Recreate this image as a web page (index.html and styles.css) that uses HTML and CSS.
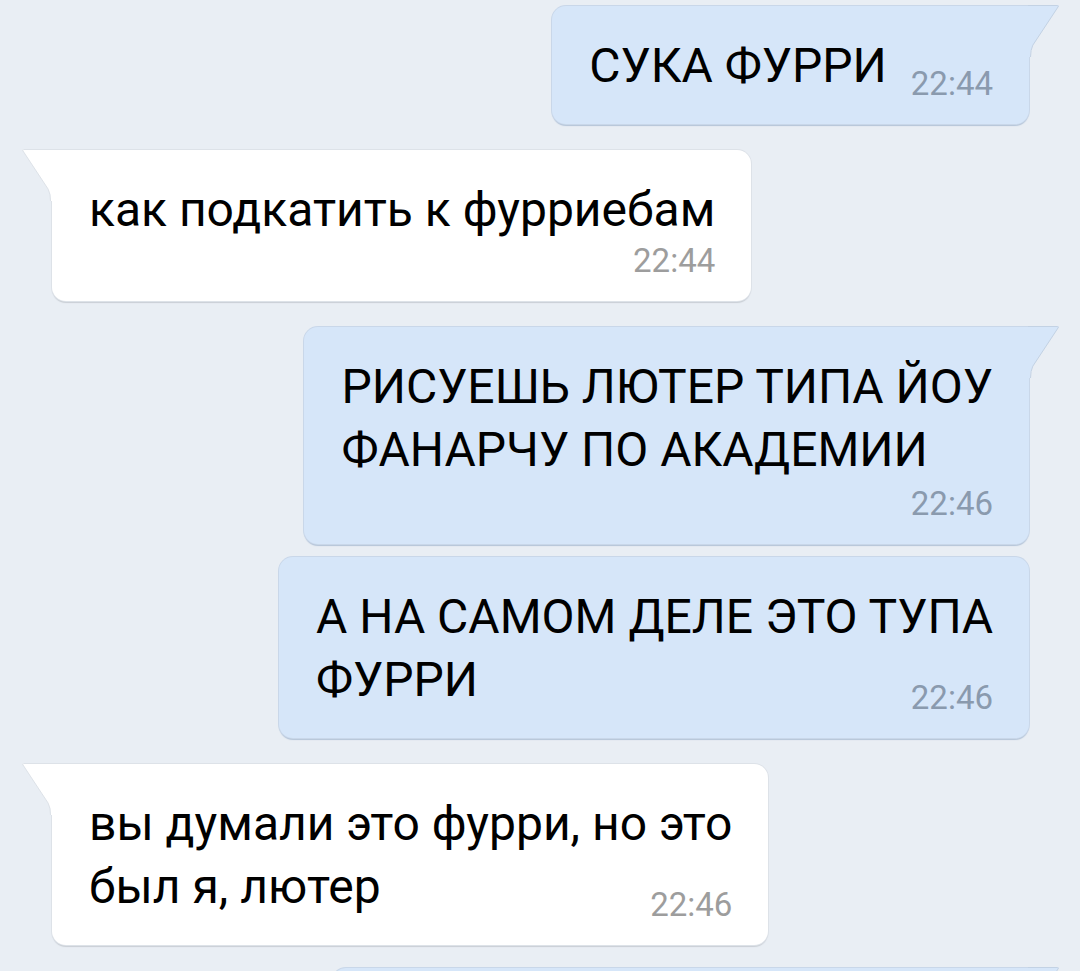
FILE: index.html
```html
<!DOCTYPE html>
<html lang="ru">
<head>
<meta charset="utf-8">
<title>Чат</title>
<link rel="stylesheet" href="styles.css">
</head>
<body>
<div class="chat">
  <div class="bubble out tail">
    <svg class="tail-svg" viewBox="0 0 31 52" aria-hidden="true"><path class="tail-fill" d="M0 0 H29.5 Q31.2 0 30.2 1.8 L5 40 Q2 45 2 50 V52 H0 Z"/><path class="tail-line" d="M0 0.5 H29.5 Q31 0.5 30 2 L4.8 40.2 Q2.5 45 2.5 52"/></svg>
    <div class="row">
      <span class="text">СУКА ФУРРИ</span>
      <span class="time">22:44</span>
    </div>
  </div>

  <div class="bubble in tail">
    <svg class="tail-svg" viewBox="0 0 31 52" aria-hidden="true"><path class="tail-fill" d="M0 0 H29.5 Q31.2 0 30.2 1.8 L5 40 Q2 45 2 50 V52 H0 Z"/><path class="tail-line" d="M0 0.5 H29.5 Q31 0.5 30 2 L4.8 40.2 Q2.5 45 2.5 52"/></svg>
    <div class="text">как подкатить к фурриебам</div>
    <div class="time block">22:44</div>
  </div>

  <div class="bubble out tail">
    <svg class="tail-svg" viewBox="0 0 31 52" aria-hidden="true"><path class="tail-fill" d="M0 0 H29.5 Q31.2 0 30.2 1.8 L5 40 Q2 45 2 50 V52 H0 Z"/><path class="tail-line" d="M0 0.5 H29.5 Q31 0.5 30 2 L4.8 40.2 Q2.5 45 2.5 52"/></svg>
    <div class="text">РИСУЕШЬ ЛЮТЕР ТИПА ЙОУ<br>ФАНАРЧУ ПО АКАДЕМИИ</div>
    <div class="time block">22:46</div>
  </div>

  <div class="bubble out cont">
    <div class="text">А НА САМОМ ДЕЛЕ ЭТО ТУПА</div>
    <div class="row spread">
      <span class="text">ФУРРИ</span>
      <span class="time">22:46</span>
    </div>
  </div>

  <div class="bubble in tail">
    <svg class="tail-svg" viewBox="0 0 31 52" aria-hidden="true"><path class="tail-fill" d="M0 0 H29.5 Q31.2 0 30.2 1.8 L5 40 Q2 45 2 50 V52 H0 Z"/><path class="tail-line" d="M0 0.5 H29.5 Q31 0.5 30 2 L4.8 40.2 Q2.5 45 2.5 52"/></svg>
    <div class="text">вы думали это фурри, но это</div>
    <div class="row spread">
      <span class="text">был я, лютер</span>
      <span class="time">22:46</span>
    </div>
  </div>

  <div class="bubble out tail next">
    <svg class="tail-svg" viewBox="0 0 31 52" aria-hidden="true"><path class="tail-fill" d="M0 0 H29.5 Q31.2 0 30.2 1.8 L5 40 Q2 45 2 50 V52 H0 Z"/><path class="tail-line" d="M0 0.5 H29.5 Q31 0.5 30 2 L4.8 40.2 Q2.5 45 2.5 52"/></svg>
  </div>
</div>
</body>
</html>
```

FILE: styles.css
```css
html, body {
  margin: 0;
  padding: 0;
  background: #e9eef4;
}

body {
  height: 971px;
  overflow: hidden;
  font-family: Roboto, "Noto Sans", "Liberation Sans", sans-serif;
  color: #000;
}

.chat {
  display: flex;
  flex-direction: column;
  padding-top: 6px;
}

.bubble {
  position: relative;
  box-sizing: border-box;
  border-radius: 14px;
  padding: 28px 36px 22px 37px;
  margin-top: 26px;
}

.bubble:first-child {
  margin-top: 0;
}

.bubble.cont {
  margin-top: 13px;
}

.bubble.next {
  margin-top: 23px;
  width: 697px;
  height: 120px;
}

.out {
  align-self: flex-end;
  margin-right: 51px;
  background: #d6e6f9;
  box-shadow: 0 0 0 1px #c9d7e9, 0 1.5px 1px #b4c4d8;
}

.in {
  align-self: flex-start;
  margin-left: 52px;
  background: #ffffff;
  box-shadow: 0 0 0 1px #dde2e8, 0 1.5px 1px #c9ced5;
}

.out.tail {
  border-top-right-radius: 0;
}

.in.tail {
  border-top-left-radius: 0;
}

.tail-svg {
  position: absolute;
  top: -1px;
  width: 31px;
  height: 52px;
  overflow: visible;
}

.out .tail-svg {
  right: -30px;
}

.in .tail-svg {
  left: -30px;
  transform: scaleX(-1);
}

.out .tail-fill { fill: #d6e6f9; }
.in .tail-fill { fill: #ffffff; }

.tail-line {
  fill: none;
  stroke-width: 1;
}

.out .tail-line { stroke: #c3d2e4; }
.in .tail-line { stroke: #dde2e8; }

.text {
  font-size: 48px;
  line-height: 63px;
  white-space: nowrap;
}

.row {
  display: flex;
  align-items: flex-end;
}

.row .text {
  margin-bottom: 5px;
}

.row .time {
  margin-left: 24px;
}

.row.spread {
  justify-content: space-between;
}

.time {
  font-size: 33px;
  line-height: 36px;
  font-weight: 400;
  white-space: nowrap;
}

.out .time { color: #8a9aae; }
.in .time { color: #9d9d9d; }

.time.block {
  text-align: right;
  margin-top: 5px;
}

.in .time.block {
  margin-top: 2px;
}
```
